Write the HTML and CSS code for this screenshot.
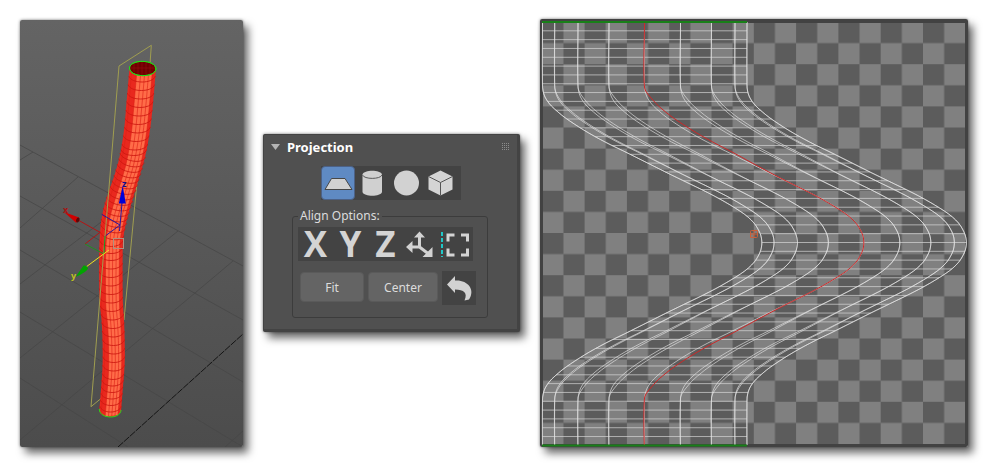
FILE: index.html
```html
<!DOCTYPE html>
<html lang="en">
<head>
<meta charset="utf-8">
<title>Projection</title>
<link rel="stylesheet" href="styles.css">
</head>
<body>
<main class="board">
  <section class="view" aria-label="Viewport">
    <svg class="drawing" viewBox="20 20 223 427">
      <defs>
        <linearGradient id="sky" x1="0" y1="0" x2="0" y2="1">
          <stop offset="0" stop-color="#646464"/><stop offset="1" stop-color="#4c4c4c"/>
        </linearGradient>
      </defs>
      <rect x="20" y="20" width="223" height="427" fill="url(#sky)"/>
      <path class="floor" d="M20 145L243 266M20 196L243 320M20 250L243 382M20 312L243 447M20 378L128 447M20 160L33 152M20 228L78 177M20 284L126 203M20 358L178 231M20 440L233 261M225 447L243 431"/>
      <path class="horizon" d="M118 447L243 334"/>
      <path class="frame" d="M119 66L151.300 45.300L150 64M140 150L124 320M91 406.700L104 396"/>
      <g id="tube"></g>
      <path class="frame" d="M119 66L91 406.700"/>
      <rect class="pivot" x="113.500" y="238.500" width="10" height="10"/>
      <path class="axis blue" d="M122 203L119.500 231M101.700 214.300L120 225L105.700 235.700"/>
      <path d="M122.700 186L118.800 203.500L125.800 203.500Z" fill="#0000d8"/>
      <path class="axis red" d="M78 220L100 232.300L85 244"/>
      <path d="M64 212L79 217.500Q80 221 76 222.700Z" fill="#d00000"/>
      <ellipse cx="77.800" cy="220" rx="1.600" ry="2.500" fill="#5a0808" transform="rotate(25 77.800 220)"/>
      <path class="axis green" d="M85 244L104 254L105 236"/>
      <path class="axis yellow" d="M109 250L86 267"/>
      <path d="M75.500 277L83.500 265.500Q87 265 88 268.500Q87 272 75.500 277Z" fill="#00a400"/>
      <text class="tag red-tag" x="63" y="213">x</text>
      <text class="tag yellow-tag" x="71" y="279">y</text>
      <text class="tag blue-tag" x="122" y="187">z</text>
    </svg>
  </section>

  <section class="panel">
    <header class="panel-head">
      <svg class="arrow" viewBox="0 0 9 6"><path d="M0 0H9L4.500 6Z" fill="#b4b4b4"/></svg>
      <h1 class="title">Projection</h1>
      <svg class="grip" viewBox="0 0 8 8"><path d="M0 .5H8M0 2.500H8M0 4.500H8M0 6.500H8" stroke="#8c8c8c" stroke-dasharray="1 1"/></svg>
    </header>
    <div class="tools shapes">
      <button class="tool active" aria-label="Planar"><svg viewBox="0 0 34 34"><path d="M10.500 12.500H24L31 23.500H4Z" fill="#d2d2d2" stroke="#474747" stroke-linejoin="round"/></svg></button>
      <button class="tool" aria-label="Cylindrical"><svg viewBox="0 0 34 34"><path d="M7.500 8.500V26C9 31 25.500 31 27 26V8.500C25.500 3.500 9 3.500 7.500 8.500Z" fill="#d0d0d0"/><path d="M7.500 9C9 13.500 25.500 13.500 27 9" fill="none" stroke="#5a5a5a"/></svg></button>
      <button class="tool" aria-label="Spherical"><svg viewBox="0 0 34 34"><circle cx="17.500" cy="17" r="12.500" fill="#d2d2d2"/></svg></button>
      <button class="tool" aria-label="Box"><svg viewBox="0 0 34 34"><path d="M17.500 4.500L29.500 10.500V23.500L17.500 29.500L5.500 23.500V10.500Z" fill="#d4d4d4"/><path d="M5.500 10.500L17.500 16.500L29.500 10.500M17.500 16.500V29.500" fill="none" stroke="#555"/></svg></button>
    </div>
    <fieldset class="options">
      <legend>Align Options:</legend>
      <div class="tools">
        <button class="tool letter">X</button>
        <button class="tool letter">Y</button>
        <button class="tool letter">Z</button>
        <button class="tool" aria-label="Best align"><svg viewBox="0 0 34 34"><path d="M16.500 9V20H8M16.500 20L27 28" fill="none" stroke="#d2d2d2" stroke-width="3"/><path d="M16.500 4.500L22 10.500H11ZM3 20L9.500 14V26ZM29.500 30V20L19.500 30Z" fill="#d2d2d2"/></svg></button>
        <button class="tool" aria-label="Align to view"><svg viewBox="0 0 34 34"><path d="M4 5V30" stroke="#20c8c8" stroke-width="2" stroke-dasharray="4 2"/><path d="M16.500 8H10V14.500M23 8H29.500V14.500M10 21.500V28H16.500M29.500 21.500V28H23" fill="none" stroke="#d4d4d4" stroke-width="3"/></svg></button>
      </div>
      <div class="actions">
        <button class="push fit">Fit</button>
        <button class="push center">Center</button>
        <button class="tool reset" aria-label="Reset"><svg viewBox="0 0 34 34"><path d="M5 13.500L13 5V9.500C25 8.500 34 18 27 28.500L22.500 29.500C26 22 22 18.500 13 18.500V22Z" fill="#d2d2d2"/></svg></button>
      </div>
    </fieldset>
  </section>

  <section class="view" aria-label="UV editor">
    <svg class="drawing" viewBox="540 19 428 428">
      <defs>
        <pattern id="check" x="542.300" y="22" width="42.300" height="42.200" patternUnits="userSpaceOnUse">
          <rect width="42.300" height="42.200" fill="#5c5c5c"/>
          <path d="M21.150 0H42.300V21.100H21.150ZM0 21.100H21.150V42.200H0Z" fill="#808080"/>
        </pattern>
      </defs>
      <rect x="540" y="19" width="428" height="428" fill="#424242"/>
      <rect x="543" y="23" width="422" height="421" fill="url(#check)"/>
      <g id="mesh"></g>
      <path class="seam" d="M542 22H747M542 445.500H747"/>
      <path class="mark" d="M750.500 231.500Q750.500 230.500 751.500 230.500H757.500V236.500Q757.500 237.500 756.500 237.500H750.500ZM754 230V238M750 234H758"/>
    </svg>
  </section>
</main>
<script src="drawing.js"></script>
</body>
</html>
```
FILE: styles.css
```css
* { box-sizing: border-box; }

body {
  margin: 0;
  background: #fff;
  font-family: "Noto Sans", "Open Sans", sans-serif;
  font-size: 12px;
  color: #dcdcdc;
}

.board {
  display: grid;
  grid-template-columns: 223fr 257fr 428fr;
  gap: 20px;
  align-items: center;
  padding: 19px 20px;
}

.view, .panel {
  border-radius: 2px;
  box-shadow: 5px 6px 8px rgba(0, 0, 0, .6), 0 0 3px rgba(0, 0, 0, .5);
}

.drawing { display: block; width: 100%; border-radius: 2px; }

/* Viewport */
.floor { fill: none; stroke: #474747; stroke-width: 1; opacity: .75; }
.horizon { stroke: #151515; stroke-width: 1; stroke-dasharray: 7 1; }
.frame { fill: none; stroke: #a09e50; stroke-width: 1; }
.body { fill: #e9281e; }
.lit { fill: #ff6c48; }
.ring { fill: none; stroke: #cc1710; stroke-width: 1; opacity: .85; }
.rib { fill: none; stroke: #dc2218; stroke-width: 1; opacity: .6; }
.rim { fill: none; stroke: #22dc18; stroke-width: 1; }
.mouth { fill: #700000; stroke: #22dc18; stroke-width: 1; }
.grain { fill: none; stroke: #981010; stroke-width: 1; opacity: .5; }
.pivot { fill: none; stroke: #b09080; }
.axis { fill: none; stroke-width: 1; }
.red { stroke: #b41414; }
.green { stroke: #209020; }
.blue { stroke: #2818a0; }
.yellow { stroke: #f0e020; }
.tag { font-size: 9px; font-weight: bold; }
.red-tag { fill: #a81414; }
.yellow-tag { fill: #c0c020; }
.blue-tag { fill: #101090; }

/* Panel */
.panel {
  background: #505050;
  border: solid #434343;
  border-width: 1px 3px 3px 1px;
}

.panel-head {
  display: flex;
  align-items: center;
  gap: 7px;
  height: 23px;
  padding: 0 7px;
}

.arrow { width: 9px; height: 6px; }
.title { margin: 0; font-size: 13px; line-height: 16px; color: #fff; }
.grip { width: 8px; height: 8px; margin-left: auto; }

.tools { display: flex; width: max-content; background: #434343; }
.shapes { margin: 8px auto; padding-right: 4px; }

button { border: 0; padding: 0; color: inherit; font: inherit; }
.tool { width: 34px; height: 34px; background: #434343; }
.tool svg { display: block; width: 34px; height: 34px; }
.active { background: #5f8ac3; border: 1px solid #4c6186; border-radius: 4px; }
.active svg { margin: -1px; }
.options .tools .tool { width: 35px; }
.letter {
  font-family: "Open Sans", sans-serif;
  font-size: 35px;
  line-height: 34px;
  font-weight: bold;
  color: #d4d4d4;
}

.options {
  min-width: 0;
  margin: 0 29px 11px 28px;
  padding: 3px 5px 12px;
  border: 1px solid #3c3c3c;
  border-radius: 3px;
}
.options legend { padding: 0 2px; line-height: 16px; }

.actions { display: flex; gap: 4px; margin: 10px 2px 0; }
.push {
  height: 30px;
  margin-top: 1px;
  background: #646464;
  border: 1px solid #5a5a5a;
  border-radius: 4px;
}
.fit { width: 64px; }
.center { width: 70px; }

/* UV editor */
.wire { fill: none; stroke: #e4e4e4; stroke-width: 1; opacity: .66; }
.rung { fill: none; stroke: #d8d8d8; stroke-width: 1; opacity: .68; }
.guide { fill: none; stroke: #cc2828; stroke-width: 1; }
.seam { stroke: #188018; stroke-width: 2; }
.mark { fill: none; stroke: #c8603c; stroke-width: 1; }
```
FILE: drawing.js
```js
const NS = "http://www.w3.org/2000/svg";

function add(parent, cls, d) {
  const path = document.createElementNS(NS, "path");
  path.setAttribute("class", cls);
  path.setAttribute("d", d);
  parent.appendChild(path);
}

// Smooth interpolation through [position, value] pairs.
function curve(points) {
  return function (t) {
    let i = 0;
    while (i < points.length - 2 && t > points[i + 1][0]) i++;
    const a = points[i], b = points[i + 1];
    const before = points[i - 1] || a, after = points[i + 2] || b;
    const h = b[0] - a[0];
    const k = Math.min(1, Math.max(0, (t - a[0]) / h));
    const m0 = (b[1] - before[1]) / (b[0] - before[0]) * h;
    const m1 = (after[1] - a[1]) / (after[0] - a[0]) * h;
    return (2 * k ** 3 - 3 * k ** 2 + 1) * a[1] + (k ** 3 - 2 * k ** 2 + k) * m0
      + (3 * k ** 2 - 2 * k ** 3) * b[1] + (k ** 3 - k ** 2) * m1;
  };
}

const line = pts => "M" + pts.map(p => p[0].toFixed(2) + " " + p[1].toFixed(2)).join("L");

// Bent tube in the viewport.
const tube = document.getElementById("tube");
const left = curve([[68, 129.5], [100, 126.7], [130, 124], [157, 119.5], [175, 114.5], [193, 108.3],
  [210, 103.3], [227, 100.5], [250, 99.3], [300, 99.5], [320, 101.5], [340, 102.5], [367, 102.5], [393, 100.7], [411, 99.3]]);
const right = curve([[68, 156], [100, 153.3], [130, 150], [157, 145], [180, 138.3], [203, 131.5],
  [223, 126], [238, 123.3], [250, 122.7], [300, 122.8], [320, 124], [340, 124.7], [363, 124.7], [390, 122.7], [411, 121]]);

function ribAt(f) {
  const pts = [];
  const sag = Math.sin(Math.acos(2 * f - 1)) * 6;
  for (let y = 68; y <= 411; y += 3) pts.push([left(y) + (right(y) - left(y)) * f, y + sag]);
  pts.push([left(411) + (right(411) - left(411)) * f, 411 + sag]);
  return pts;
}
function ringAt(y) {
  const l = left(y), r = right(y), tilt = y > 150 && y < 235 ? 2 : 0;
  return `M${l} ${y - tilt}C${l + 2} ${y + 8 - tilt} ${r - 2} ${y + 8 + tilt} ${r} ${y + tilt}`;
}
const edge = line(ribAt(1).reverse()).slice(1);
add(tube, "body", line(ribAt(0)) + "C102 419 118 419 121 411L" + edge + "Z");
add(tube, "lit", line(ribAt(.27)) + "L" + line(ribAt(.86).reverse()).slice(1) + "Z");
for (const f of [.08, .27, .42, .57, .72, .86]) add(tube, "rib", line(ribAt(f)));
for (let y = 76; y < 407;) {
  add(tube, "ring", ringAt(y));
  y += y < 140 ? 8.5 : y < 225 ? 5.5 : y < 250 ? 7 : y < 370 ? 8.5 : 6.5;
}
const lip = "M129.500 68C130 59 155.500 59 156 69C155 78 130 78 129.500 68Z";
add(tube, "mouth", lip);
add(tube, "grain", "M134 64V72M138 62V74M142 62V75M146 62V75M150 63V74M131 68H155");
add(tube, "rim", lip);
add(tube, "rim", "M99.300 409C99.300 419.500 121 419.500 121 410");

// Unwrapped mesh in the UV editor, mirrored about its middle row.
const mesh = document.getElementById("mesh");
const middle = 242.7;
const shift = curve([[22, 0], [86, 0], [92, .8], [98, 3], [105, 8], [112, 15.5], [118, 23], [128, 38], [136, 51.5],
  [144, 66.5], [152, 83], [160, 99], [167, 113], [173, 125], [182, 143.5], [190, 160], [198, 175.5],
  [207, 191], [215, 203], [223, 211.5], [230, 216], [236, 218.5], [242.7, 219.5]]);
const spread = curve([[22, 0], [88, 0], [100, .7], [120, 1], [145, .9], [165, .4], [185, 0], [243, 0]]);
const columns = [542.5, 554.7, 578, 609, 644.5, 680.5, 711.5, 735, 747];
const doubled = [0, 2, 4, 5, 6, 5, 4, 2, 0];

function wire(x, extra) {
  const pts = [];
  for (let y = 22; y <= 445; y += 3) {
    const at = y > middle ? 2 * middle - y : y;
    pts.push([x + shift(at) + spread(at) * extra, y]);
  }
  pts.push([x, 445]);
  return line(pts);
}
for (let i = 1; i < 48; i++) {
  const y = 22 + i * 8.82;
  const s = shift(y > middle ? 2 * middle - y : y);
  add(mesh, "rung", `M${542.5 + s} ${y}H${747 + s}`);
}
columns.forEach((x, i) => {
  add(mesh, "wire", wire(x, 0));
  if (i !== 4) add(mesh, "wire", wire(x, doubled[i]));
});
add(mesh, "guide", wire(columns[4], doubled[4]));
```
